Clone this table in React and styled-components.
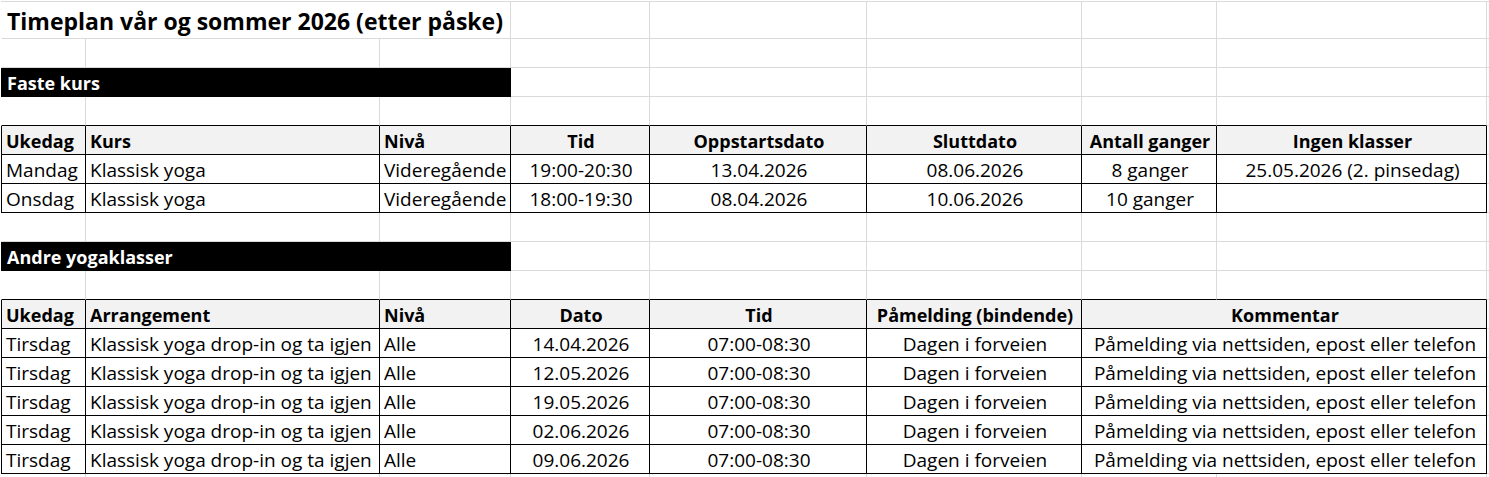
import React from "react";
import styled, { createGlobalStyle } from "styled-components";

const GRID = "#dadada";

const Global = createGlobalStyle`
  html, body { margin: 0; padding: 0; background: #fff; }
  body { font-family: "Open Sans", "Liberation Sans", Arial, sans-serif; color: #000; }
`;

const Page = styled.div`
  width: 1489px;
  padding: 1px 0 0 1px;
  box-sizing: border-box;
  overflow: hidden;
`;

const Sheet = styled.div`
  display: grid;
  grid-template-columns: 85px 294px 131px 139px 217px 215px 135px 270px 1fr;
  grid-template-rows: 37px repeat(16, 29px);
  border-top: 1px solid ${GRID};
  font-size: 19px;
`;

const Cell = styled.div`
  grid-column: span ${(p) => p.$span || 1};
  box-sizing: border-box;
  min-width: 0;
  display: flex;
  align-items: center;
  justify-content: ${(p) => (p.$center ? "center" : "flex-start")};
  padding: 1px 2px 0 4px;
  line-height: 26px;
  white-space: nowrap;
  overflow: hidden;
  font-size: ${(p) => (p.$bold ? "18px" : "19px")};
  font-weight: ${(p) => (p.$bold ? 700 : 400)};
  border-right: 1px solid ${(p) => (p.$dr ? "#000" : GRID)};
  border-bottom: 1px solid ${(p) => (p.$db ? "#000" : GRID)};
  border-left: ${(p) => (p.$first ? `1px solid ${p.$dl ? "#000" : "#fff"}` : "none")};
  background: ${(p) => (p.$head ? "#f2f2f2" : "#fff")};
`;

const TitleCell = styled(Cell)`
  font-size: 23px;
  font-weight: 700;
  line-height: 32px;
  padding-left: 5px;
  border-right-color: ${GRID};
`;

const BarCell = styled(Cell)`
  background: #000;
  color: #fff;
  font-size: 18px;
  font-weight: 700;
  border-color: #000;
  padding-left: 5px;
`;

const fillers = (from, to, dark) =>
  Array.from({ length: to - from }, (_, i) => {
    const col = from + i;
    return <Cell key={`f${col}`} $first={col === 0} $db={dark && col < 8} />;
  });

const EmptyRow = ({ dark }) => <>{fillers(0, 9, dark)}</>;

const TableRow = ({ cells, head }) => (
  <>
    {cells.map((c, i) => (
      <Cell
        key={i}
        $span={c.span}
        $center={c.center}
        $bold={head}
        $head={head}
        $first={i === 0}
        $dl={i === 0}
        $dr
        $db
      >
        {c.t}
      </Cell>
    ))}
    <Cell />
  </>
);

const L = (t, span) => ({ t, span });
const C = (t, span) => ({ t, center: true, span });

const kursHead = [L("Ukedag"), L("Kurs"), L("Nivå"), C("Tid"), C("Oppstartsdato"), C("Sluttdato"), C("Antall ganger"), C("Ingen klasser")];
const kurs = [
  [L("Mandag"), L("Klassisk yoga"), L("Videregående"), C("19:00-20:30"), C("13.04.2026"), C("08.06.2026"), C("8 ganger"), C("25.05.2026 (2. pinsedag)")],
  [L("Onsdag"), L("Klassisk yoga"), L("Videregående"), C("18:00-19:30"), C("08.04.2026"), C("10.06.2026"), C("10 ganger"), C("")],
];

const andreHead = [L("Ukedag"), L("Arrangement"), L("Nivå"), C("Dato"), C("Tid"), C("Påmelding (bindende)"), C("Kommentar", 2)];
const datoer = ["14.04.2026", "12.05.2026", "19.05.2026", "02.06.2026", "09.06.2026"];
const andre = datoer.map((d) => [
  L("Tirsdag"),
  L("Klassisk yoga drop-in og ta igjen"),
  L("Alle"),
  C(d),
  C("07:00-08:30"),
  C("Dagen i forveien"),
  C("Påmelding via nettsiden, epost eller telefon", 2),
]);

export default function App() {
  return (
    <Page>
      <Global />
      <Sheet>
        <TitleCell $span={3} $first>Timeplan vår og sommer 2026 (etter påske)</TitleCell>
        {fillers(3, 9)}
        <EmptyRow />
        <BarCell $span={3} $first $dl $dr $db>Faste kurs</BarCell>
        {fillers(3, 9)}
        <EmptyRow dark />
        <TableRow cells={kursHead} head />
        {kurs.map((r, i) => <TableRow key={i} cells={r} />)}
        <EmptyRow />
        <BarCell $span={3} $first $dl $dr $db>Andre yogaklasser</BarCell>
        {fillers(3, 9)}
        <EmptyRow dark />
        <TableRow cells={andreHead} head />
        {andre.map((r, i) => <TableRow key={i} cells={r} />)}
        <EmptyRow />
      </Sheet>
    </Page>
  );
}
